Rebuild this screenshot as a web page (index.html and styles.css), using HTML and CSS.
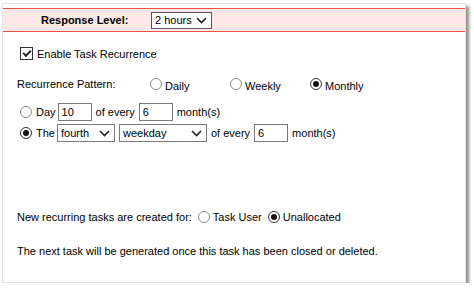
FILE: index.html
```html
<!DOCTYPE html>
<html lang="en">
<head>
  <meta charset="UTF-8" />
  <title>Task Recurrence</title>
  <link rel="stylesheet" href="styles.css">
</head>
<body>

  <div class="panel">
    <!-- Response level bar -->
    <div class="level-bar">
      <span class="level-label">Response Level:</span>
      <label class="pick pick-hours">
        <select><option>2 hours</option></select>
        <svg class="chev" width="11" height="7" viewBox="0 0 11 7"><path d="M1 1 L5.5 5.5 L10 1" fill="none" stroke="#222" stroke-width="1.6"/></svg>
      </label>
    </div>

    <div class="content">
      <label class="row enable-row">
        <input type="checkbox" class="check" checked>
        <span>Enable Task Recurrence</span>
      </label>

      <div class="row pattern-row">
        <span class="pattern-label">Recurrence Pattern:</span>
        <label class="opt opt-daily"><input type="radio" name="pattern" class="radio"><span class="low">Daily</span></label>
        <label class="opt opt-weekly"><input type="radio" name="pattern" class="radio"><span class="low">Weekly</span></label>
        <label class="opt"><input type="radio" name="pattern" class="radio" checked><span class="low">Monthly</span></label>
      </div>

      <div class="row day-row">
        <input type="radio" name="monthly" class="radio">
        <span>Day</span>
        <input type="text" class="box" value="10">
        <span>of every</span>
        <input type="text" class="box" value="6">
        <span>month(s)</span>
      </div>

      <div class="row the-row">
        <input type="radio" name="monthly" class="radio" checked>
        <span>The</span>
        <label class="pick pick-which">
          <select><option>fourth</option></select>
          <svg class="chev" width="11" height="7" viewBox="0 0 11 7"><path d="M1 1 L5.5 5.5 L10 1" fill="none" stroke="#222" stroke-width="1.6"/></svg>
        </label>
        <label class="pick pick-day">
          <select><option>weekday</option></select>
          <svg class="chev" width="11" height="7" viewBox="0 0 11 7"><path d="M1 1 L5.5 5.5 L10 1" fill="none" stroke="#222" stroke-width="1.6"/></svg>
        </label>
        <span>of every</span>
        <input type="text" class="box" value="6">
        <span>month(s)</span>
      </div>

      <div class="row owner-row">
        <span>New recurring tasks are created for:</span>
        <label class="opt"><input type="radio" name="owner" class="radio"><span>Task User</span></label>
        <label class="opt"><input type="radio" name="owner" class="radio" checked><span>Unallocated</span></label>
      </div>

      <p class="note">The next task will be generated once this task has been closed or deleted.</p>
    </div>
  </div>

</body>
</html>
```

FILE: styles.css
```css
body {
  margin: 0;
  background: #fff;
  font-family: "Liberation Sans", Arial, sans-serif;
  font-size: 11px;
  color: #000;
}

.panel {
  box-sizing: border-box;
  width: 464px;
  height: 280px;
  margin: 3px 0 0 2px;
  padding-top: 4px;
  background: #fff;
  border: 1px solid #e4e4e4;
  box-shadow: 3px 3px 3px rgba(0, 0, 0, 0.45);
}

.level-bar {
  display: flex;
  align-items: center;
  gap: 18px;
  height: 22px;
  padding-left: 38px;
  background: #fde8e8;
  border-top: 1px solid #e8524a;
  border-bottom: 1px solid #e8524a;
}

.level-label {
  font-weight: bold;
  font-size: 11px;
  width: 92px;
}

.content {
  padding-left: 14px;
}

.row {
  display: flex;
  align-items: center;
  gap: 3px;
}

.enable-row {
  margin-top: 15px;
  padding-left: 3px;
}

.pattern-row {
  margin-top: 18px;
  gap: 0;
}

.pattern-label {
  width: 133px;
}

.opt {
  display: flex;
  align-items: center;
  gap: 3px;
}

.opt-daily,
.opt-weekly {
  width: 80px;
}

.low {
  position: relative;
  top: 2px;
}

.day-row {
  margin-top: 13px;
  padding-left: 3px;
  gap: 4px;
}

.day-row span:first-of-type {
  margin-right: -2px;
}

.the-row {
  margin-top: 3px;
  padding-left: 3px;
  gap: 4px;
}

.the-row span:first-of-type {
  margin-right: -2px;
}

.owner-row {
  margin-top: 69px;
}

.owner-row .opt {
  margin-left: 3px;
}

.note {
  margin: 22px 0 0;
}

/* controls */
.radio {
  appearance: none;
  box-sizing: border-box;
  width: 12px;
  height: 12px;
  margin: 0;
  border: 1px solid #8a8a8a;
  border-radius: 50%;
  background: #fff;
  display: grid;
  place-content: center;
}

.radio:checked {
  border-color: #333;
}

.radio:checked::before {
  content: "";
  width: 6px;
  height: 6px;
  border-radius: 50%;
  background: #111;
}

.check {
  appearance: none;
  box-sizing: border-box;
  width: 13px;
  height: 13px;
  margin: 0 1px 0 0;
  border: 1px solid #333;
  background: #fff;
  display: grid;
  place-content: center;
}

.check:checked::before {
  content: "";
  width: 6px;
  height: 3px;
  border-left: 2px solid #222;
  border-bottom: 2px solid #222;
  transform: translateY(-1px) rotate(-45deg);
}

.box {
  box-sizing: border-box;
  width: 34px;
  height: 18px;
  padding: 0 0 0 3px;
  border: 1px solid #7a7a7a;
  font: inherit;
  color: #000;
  background: #fff;
}

.pick {
  box-sizing: border-box;
  display: flex;
  align-items: center;
  height: 18px;
  padding-right: 4px;
  border: 1px solid #7a7a7a;
  background: #fff;
}

.pick select {
  appearance: none;
  flex: 1;
  min-width: 0;
  border: none;
  padding: 0 0 0 3px;
  background: transparent;
  font: inherit;
  color: #000;
  outline: none;
}

.pick-hours {
  width: 61px;
  height: 17px;
  border-color: #555;
}

.pick-which {
  width: 58px;
}

.pick-day {
  width: 88px;
}
```
